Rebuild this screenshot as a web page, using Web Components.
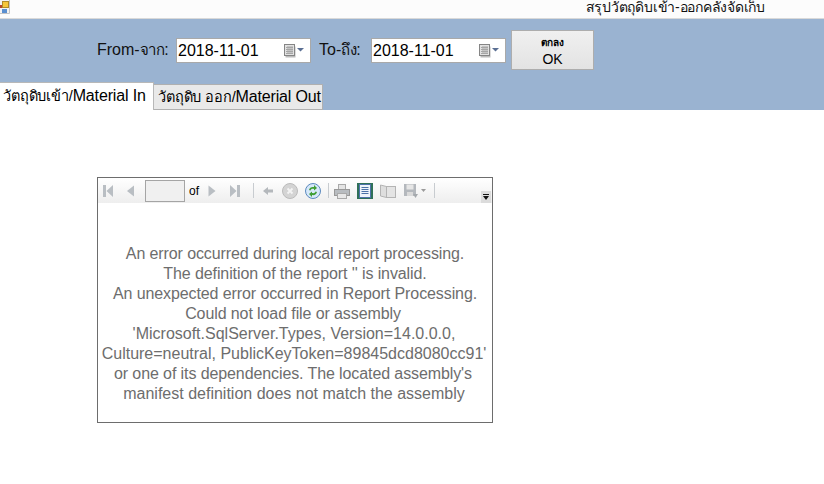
<!doctype html>
<html>
<head>
<meta charset="utf-8">
<style>
  html, body { margin: 0; height: 100%; background: #fff; }
  body { font-family: "Liberation Sans", "Noto Sans", sans-serif; width: 824px; height: 484px; overflow: hidden; }
</style>
</head>
<body>
<stock-form></stock-form>

<script>
  //Small helper so each component only has to pass style + markup
  function shadowOf(el, html) {
    el.attachShadow({ mode: 'open' }).innerHTML = html;
  }

  const FONT = `"Liberation Sans", "Noto Sans", "DejaVu Sans", sans-serif`;

  class TitleBar extends HTMLElement {
    connectedCallback() {
      shadowOf(this, `
        <style>
          :host { display: flex; height: 18px; background: #fcfcfc; border-bottom: 1px solid #d9d9d9; justify-content: flex-end; align-items: flex-start; font: 14px/15px ${FONT}; letter-spacing: -.23px; color: #111; overflow: hidden; }
          svg { margin-right: auto; display: block; }
          span { margin-right: 59px; white-space: nowrap; }
        </style>
        <svg width="10" height="14" viewBox="0 0 10 14">
          <rect x="0" y="0" width="9.500" height="13.500" fill="#f3f3f3"/>
          <path d="M9.500 0v13.500H0" fill="none" stroke="#c4c4c4"/>
          <rect x="0" y="5" width="2" height="3" fill="#b5452c"/>
          <rect x="2.500" y="1.500" width="6" height="6" fill="#f6c63a" stroke="#b08a2a"/>
          <rect x="2" y="9" width="5" height="4" fill="#5a8fd0"/>
        </svg>
        <span><slot></slot></span>`);
    }
  }

  class DateBox extends HTMLElement {
    connectedCallback() {
      shadowOf(this, `
        <style>
          :host { display: flex; align-items: center; box-sizing: border-box; width: 135px; height: 25px; background: #fff; border: 1px solid #a9a9a9; font: 16px ${FONT}; color: #000; padding-left: 1px; }
          span { flex: 1; }
          svg { margin-right: 5px; margin-top: 1px; display: block; }
        </style>
        <span><slot></slot></span>
        <svg width="21" height="14" viewBox="0 0 21 14">
          <rect x="1.500" y="2.500" width="10" height="11" fill="#bbb"/>
          <rect x=".5" y=".5" width="10" height="11" fill="#e2e2e2" stroke="#858585"/>
          <path d="M2 3.500h7M2 5.500h7M2 7.500h7M2 9.500h7M4 2v8M6 2v8M8 2v8" stroke="#a6a6a6" fill="none"/>
          <path d="M13 4h7l-3.500 3.500z" fill="#5a6f93"/>
        </svg>`);
    }
  }

  class OkButton extends HTMLElement {
    connectedCallback() {
      shadowOf(this, `
        <style>
          :host { display: flex; flex-direction: column; align-items: center; justify-content: center; box-sizing: border-box; width: 83px; height: 40px; padding-top: 3px; background: linear-gradient(#f0f0f0, #e3e3e3); border: 1px solid #adadad; color: #000; font: 14px/18px ${FONT}; }
          small { font-size: 10px; line-height: 14px; font-weight: bold; }
        </style>
        <small>ตกลง</small><span>OK</span>`);
    }
  }

  class TabStrip extends HTMLElement {
    connectedCallback() {
      shadowOf(this, `
        <style>
          :host { display: flex; align-items: flex-end; height: 28px; font: 16px/20px ${FONT}; letter-spacing: -.15px; color: #000; }
          div { box-sizing: border-box; white-space: nowrap; }
          b { font-weight: normal; font-size: 14.500px; }
          .on { height: 28px; width: 154px; background: #fff; border: 1px solid #b8b8b8; border-width: 1px 1px 0 0; padding: 3px 0 0 3px; position: relative; z-index: 1; }
          .off { height: 26px; width: 170px; background: #e9e9e9; border: 1px solid #b0b0b0; margin-left: -1px; padding: 2px 0 0 4px; }
        </style>
        <div class="on"><b>วัตถุดิบเข้า/</b>Material In</div>
        <div class="off"><b>วัตถุดิบ ออก/</b>Material Out</div>`);
    }
  }

  class FilterBand extends HTMLElement {
    connectedCallback() {
      shadowOf(this, `
        <style>
          :host { display: block; background: #9ab3d1; height: 91px; font: 16px ${FONT}; color: #111; }
          .row { display: flex; align-items: flex-start; height: 63px; padding: 11px 0 0 97px; box-sizing: border-box; }
          label { box-sizing: border-box; width: 79px; line-height: 40px; height: 40px; white-space: nowrap; }
          label b { font-weight: normal; font-size: 15px; letter-spacing: -.5px; }
          label.to { width: 52px; margin-left: 8px; }
          date-box { margin-top: 8px; }
          ok-button { margin-left: 5px; }
        </style>
        <div class="row">
          <label>From-<b>จาก</b>:</label><date-box>2018-11-01</date-box>
          <label class="to">To-<b>ถึง</b>:</label><date-box>2018-11-01</date-box>
          <ok-button></ok-button>
        </div>
        <tab-strip></tab-strip>`);
    }
  }

  // toolbar glyphs, all drawn disabled-grey except refresh + layout
  const ICONS = {
    first: `<svg width="12" height="14"><path d="M1 1h3v12H1zM11 1v12L4.500 7z" fill="#b9bec3"/></svg>`,
    prev: `<svg width="10" height="14"><path d="M9 1.500v11L2 7z" fill="#b9bec3"/></svg>`,
    next: `<svg width="10" height="14"><path d="M1.500 1.500v11L8.500 7z" fill="#b9bec3"/></svg>`,
    last: `<svg width="12" height="14"><path d="M1 1v12l6.500-6zM8 1h3v12H8z" fill="#b9bec3"/></svg>`,
    back: `<svg width="12" height="12"><path d="M1 6l5-4v2.500h5v3H6V10z" fill="#b4b8bc"/></svg>`,
    stop: `<svg width="16" height="16"><circle cx="8" cy="8" r="7.500" fill="#d4d4d4" stroke="#bbb"/><path d="M5.500 5.500l5 5M10.500 5.500l-5 5" stroke="#f4f4f4" stroke-width="1.800"/></svg>`,
    refresh: `<svg width="16" height="16"><circle cx="8" cy="8" r="7.500" fill="#d6e8fa" stroke="#5b89bd"/><path d="M4 7c.5-2.500 2.500-3.500 5-3V2l3 3-3 2.500V6C7 5.600 6 6 5.500 7.500z" fill="#3f9e35"/><path d="M12 9c-.5 2.500-2.500 3.500-5 3v2l-3-3 3-2.500V10c2 .4 3 0 3.500-1.500z" fill="#3f9e35"/></svg>`,
    print: `<svg width="16" height="16"><rect x="4.500" y="1.500" width="7" height="5" fill="#e4e4e4" stroke="#a9a9a9"/><rect x=".5" y="6.500" width="15" height="6" fill="#b8bcc0" stroke="#999"/><rect x="3.500" y="10.500" width="9" height="5" fill="#e8e8e8" stroke="#a9a9a9"/></svg>`,
    layout: `<svg width="16" height="16"><rect width="16" height="16" fill="#2f7058"/><rect x="2.500" y="1.500" width="11" height="13" fill="#eef4fb" stroke="#4c72a8"/><path d="M4.500 4.500h7M4.500 6.500h7M4.500 8.500h7M4.500 10.500h7" stroke="#4c72a8"/></svg>`,
    page: `<svg width="16" height="14"><path d="M.5 1l6 1.500v11l-6-1.500z" fill="#dedede" stroke="#b4b4b4"/><rect x="6.500" y="2.500" width="9" height="11" fill="#e4e4e4" stroke="#b4b4b4"/></svg>`,
    save: `<svg width="24" height="16"><rect x="1" y="1" width="12" height="12" fill="#b4b8bd"/><rect x="3.500" y="1.500" width="7" height="5" fill="#e6e6e6"/><rect x="4" y="9" width="6" height="4" fill="#dadada"/><path d="M10 11h5l-2.500 4z" fill="#a5a9ad"/><path d="M18 6h5l-2.500 3z" fill="#9a9a9a"/></svg>`
  };

  class ReportToolbar extends HTMLElement {
    connectedCallback() {
      shadowOf(this, `
        <style>
          :host { display: flex; align-items: center; box-sizing: border-box; height: 25px; padding: 0 0 0 4px; background: linear-gradient(#ffffff, #eeeeee); font: 12px ${FONT}; color: #000; position: relative; }
          svg { display: block; flex: none; }
          .box { box-sizing: border-box; width: 40px; height: 22px; border: 1px solid #a5a5a5; background: #f0f0f0; margin: 0 4px 0 0; }
          .sep { width: 1px; height: 15px; background: #c8ccd0; flex: none; }
          /* little overflow chevron pinned in the corner */
          .more { position: absolute; right: 1px; bottom: 0; width: 10px; height: 12px; background: #dcdcdc; }
          .more::before { content: ""; position: absolute; left: 2px; top: 3px; width: 6px; height: 1px; background: #111; }
          .more::after { content: ""; position: absolute; left: 1.500px; top: 5px; border: 3.500px solid transparent; border-top: 4px solid #111; border-bottom: 0; }
        </style>
        <span style="margin-right:11px">${ICONS.first}</span>
        <span style="margin-right:10px">${ICONS.prev}</span>
        <div class="box"></div>
        <span style="margin-right:8px">of</span>
        <span style="margin-right:12px">${ICONS.next}</span>
        <span style="margin-right:12px">${ICONS.last}</span>
        <div class="sep" style="margin-right:8px"></div>
        <span style="margin-right:8px">${ICONS.back}</span>
        <span style="margin-right:7px">${ICONS.stop}</span>
        <span style="margin-right:7px">${ICONS.refresh}</span>
        <div class="sep" style="margin-right:5px"></div>
        <span style="margin-right:7px">${ICONS.print}</span>
        <span style="margin-right:7px">${ICONS.layout}</span>
        <span style="margin-right:7px">${ICONS.page}</span>
        <span style="margin-right:7px">${ICONS.save}</span>
        <div class="sep"></div>
        <div class="more"></div>`);
    }
  }

  class ReportViewer extends HTMLElement {
    connectedCallback() {
      shadowOf(this, `
        <style>
          :host { display: block; box-sizing: border-box; width: 396px; height: 246px; border: 1px solid #6d6d6d; background: #fff; }
          .msg { padding-top: 41px; text-align: center; font: 16px/20px ${FONT}; letter-spacing: -.1px; color: #6d6d6d; }
        </style>
        <report-toolbar></report-toolbar>
        <div class="msg"><slot></slot></div>`);
    }
  }

  class StockForm extends HTMLElement {
    connectedCallback() {
      shadowOf(this, `
        <style>
          :host { display: block; }
          .content { padding: 67px 0 0 97px; }
          /* these lines run a bit wider and sit left of centre in the reference */
          .wide { display: inline-block; letter-spacing: 0; margin-right: 2px; }
          .left { display: inline-block; margin-right: 4px; }
        </style>
        <title-bar>สรุปวัตถุดิบเข้า-ออกคลังจัดเก็บ</title-bar>
        <filter-band></filter-band>
        <div class="content">
          <report-viewer>
            An error occurred during local report processing.<br>
            The definition of the report '' is invalid.<br>
            An unexpected error occurred in Report Processing.<br>
            <span class="left">Could not load file or assembly</span><br>
            <span class="wide">'Microsoft.SqlServer.Types, Version=14.0.0.0,</span><br>
            <span class="wide">Culture=neutral, PublicKeyToken=89845dcd8080cc91'</span><br>
            <span class="left">or one of its dependencies. The located assembly's</span><br>
            <span class="wide">manifest definition does not match the assembly</span>
          </report-viewer>
        </div>`);
    }
  }

  customElements.define('title-bar', TitleBar);
  customElements.define('date-box', DateBox);
  customElements.define('ok-button', OkButton);
  customElements.define('tab-strip', TabStrip);
  customElements.define('filter-band', FilterBand);
  customElements.define('report-toolbar', ReportToolbar);
  customElements.define('report-viewer', ReportViewer);
  customElements.define('stock-form', StockForm);
</script>
</body>
</html>
